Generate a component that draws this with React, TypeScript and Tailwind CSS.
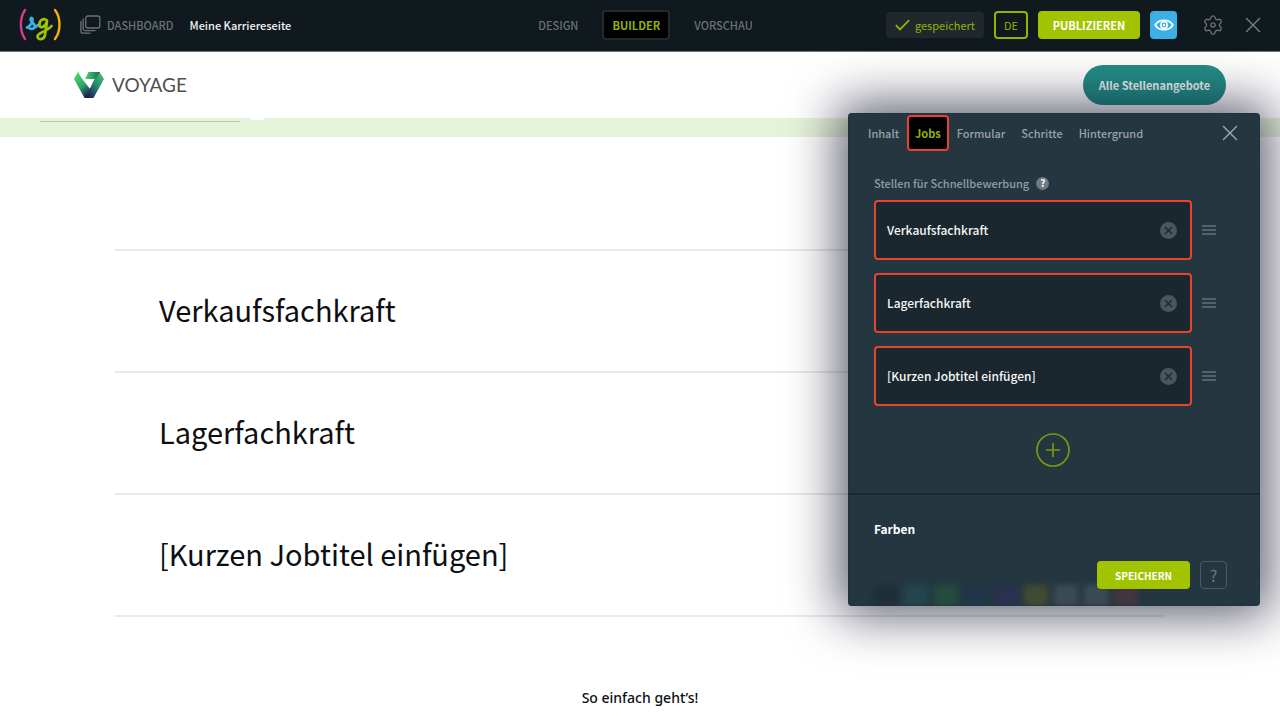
import { useState } from "react";

const topNav = ["DESIGN", "BUILDER", "VORSCHAU"];
const tabs = ["Inhalt", "Jobs", "Formular", "Schritte", "Hintergrund"];
const jobs = ["Verkaufsfachkraft", "Lagerfachkraft", "[Kurzen Jobtitel einfügen]"];
const swatches = [
  "bg-[#1b2a33]",
  "bg-[#24505a]",
  "bg-[#275a3d]",
  "bg-[#1d3652]",
  "bg-[#2e2f58]",
  "bg-[#545a2c]",
  "bg-[#4a5a64]",
  "bg-[#4a5a64]",
  "bg-[#59353e]",
];

function BrandLogo() {
  return (
    <svg width="44" height="36" viewBox="0 0 44 36" fill="none" strokeLinecap="round" strokeLinejoin="round" aria-hidden="true">
      <path d="M7 3C1.500 11 1.500 24 7 32" stroke="#d63a8e" strokeWidth="2.400" />
      <path d="M37 3C43 11 43 24 37 32" stroke="#f9b000" strokeWidth="2.400" />
      <path d="M9 20.500C12.500 19 15 15 14.500 12C14 9.500 11.500 12 13.500 14.500C15.500 17 18 18 16.500 20.500C15 22.500 11.500 22 10.500 20.500M16.500 20.500L20.500 18" stroke="#3bb0e6" strokeWidth="2.700" />
      <path d="M29 13.500C25.500 10.500 21 13.500 21.500 18C22 22 27 20.500 29 14.500L27 28C26 33.500 19.500 33 19.500 29.500C19.500 25.500 29 24.500 33.500 19" stroke="#a2c400" strokeWidth="2.700" />
    </svg>
  );
}

function StackIcon() {
  return (
    <svg width="22" height="19" viewBox="0 0 22 19" fill="none" stroke="currentColor" strokeWidth="1.300" aria-hidden="true">
      <rect x="5.800" y="1" width="14" height="12" rx="2" />
      <path d="M3.200 3.800V13.700a2 2 0 0 0 2 2H15M0.900 6.500V16.200a2 2 0 0 0 2 2H10" strokeLinecap="round" />
    </svg>
  );
}

function VoyageMark() {
  return (
    <svg width="30" height="28" viewBox="0 0 30 28" aria-hidden="true">
      <defs>
        <linearGradient id="left" x1="0" y1="0" x2="0.600" y2="1">
          <stop offset="0" stopColor="#4fe06a" />
          <stop offset="0.550" stopColor="#2fa968" />
          <stop offset="1" stopColor="#1d1f55" />
        </linearGradient>
        <linearGradient id="right" x1="1" y1="0" x2="0.100" y2="1">
          <stop offset="0" stopColor="#45cf6b" />
          <stop offset="0.500" stopColor="#268a70" />
          <stop offset="1" stopColor="#201b52" />
        </linearGradient>
        <linearGradient id="top" x1="0" y1="0" x2="1" y2="0">
          <stop offset="0" stopColor="#48d66a" />
          <stop offset="0.550" stopColor="#2c9a60" />
          <stop offset="1" stopColor="#206353" />
        </linearGradient>
      </defs>
      <path d="M4 1L0 8L10.500 27H17.500L19.500 22.500L16.500 18.500L7.500 7Z" fill="url(#left)" />
      <path d="M25.500 1L30 8L19.500 27H13L15.500 18.500L20.500 8Z" fill="url(#right)" />
      <path d="M14.500 1H26L21.500 8H11Z" fill="url(#top)" />
    </svg>
  );
}

function GearIcon() {
  return (
    <svg width="22" height="22" viewBox="0 0 24 24" fill="none" stroke="currentColor" strokeWidth="1.500" strokeLinejoin="round" aria-hidden="true">
      <path d="M9.671 4.136a2.340 2.340 0 0 1 4.659 0 2.340 2.340 0 0 0 3.319 1.915 2.340 2.340 0 0 1 2.330 4.033 2.340 2.340 0 0 0 0 3.831 2.340 2.340 0 0 1-2.330 4.033 2.340 2.340 0 0 0-3.319 1.915 2.340 2.340 0 0 1-4.659 0 2.340 2.340 0 0 0-3.320-1.915 2.340 2.340 0 0 1-2.330-4.033 2.340 2.340 0 0 0 0-3.831A2.340 2.340 0 0 1 6.350 6.051a2.340 2.340 0 0 0 3.319-1.915" />
      <circle cx="12" cy="12" r="2.300" />
    </svg>
  );
}

function CloseIcon() {
  return (
    <svg width="16" height="16" viewBox="0 0 16 16" fill="none" stroke="currentColor" strokeWidth="1.400" strokeLinecap="round" aria-hidden="true">
      <path d="M1.500 1.500L14.500 14.500M14.500 1.500L1.500 14.500" />
    </svg>
  );
}

function EyeIcon() {
  return (
    <svg width="20" height="14" viewBox="0 0 20 14" fill="none" aria-hidden="true">
      <path d="M1.200 7C4.500 0.800 15.500 0.800 18.800 7C15.500 13.200 4.500 13.200 1.200 7Z" stroke="#fff" strokeWidth="1.600" />
      <circle cx="10" cy="7" r="3.200" stroke="#fff" strokeWidth="1.500" />
      <circle cx="10" cy="7" r="1.200" fill="#fff" />
    </svg>
  );
}

function AppBar() {
  return (
    <header className="relative z-20 grid h-[52px] grid-cols-[1fr_auto_1fr] items-center border-b border-[#777] bg-[#10191e] pr-[19px] pb-0.5 pl-[18px] text-[11px] leading-4">
      <div className="flex items-center">
        <a href="#start" aria-label="Startseite">
          <BrandLogo />
        </a>
        <a href="#dashboard" className="ml-[18px] flex items-center gap-[5px] font-medium text-[#6c7275]">
          <StackIcon />
          DASHBOARD
        </a>
        <span className="ml-4 font-medium text-[#f2f3f3]">Meine Karriereseite</span>
      </div>
      <nav className="flex items-center gap-6 pl-3">
        {topNav.map((item) => (
          <a
            key={item}
            href={"#" + item.toLowerCase()}
            className={
              item === "BUILDER"
                ? "flex h-[30px] items-center rounded border-2 border-[#23292e] bg-black px-2 font-bold text-[#93b300]"
                : "font-medium text-[#6c7275]"
            }
          >
            {item}
          </a>
        ))}
      </nav>
      <div className="flex items-center justify-end">
        <span className="flex h-[26px] items-center gap-[5px] rounded bg-[#20282d] px-[9px] text-[#93b300]">
          <svg width="15" height="12" viewBox="0 0 15 12" fill="none" stroke="currentColor" strokeWidth="1.800" aria-hidden="true">
            <path d="M0.800 6.200L5 10.500L14.200 1.200" />
          </svg>
          gespeichert
        </span>
        <button className="ml-[10px] h-7 w-[34px] rounded border-2 border-[#93b300] text-[#93b300]">DE</button>
        <button className="ml-[10px] h-7 w-[102px] rounded bg-[#a2c400] font-bold text-white">PUBLIZIEREN</button>
        <button aria-label="Ansicht" className="ml-[10px] flex h-7 w-[27px] items-center justify-center rounded bg-[#3bb0e6]">
          <EyeIcon />
        </button>
        <button aria-label="Einstellungen" className="ml-[25px] text-[#6c7275]">
          <GearIcon />
        </button>
        <button aria-label="Schließen" className="ml-[21px] text-[#7b8083]">
          <CloseIcon />
        </button>
      </div>
    </header>
  );
}

function JobField({ value, index }: { value: string; index: number }) {
  const [text, setText] = useState(value);
  return (
    <li className="flex items-center gap-[10px]">
      <div className="flex h-[60px] flex-1 items-center rounded border-2 border-[#e9432d] bg-[#1a272e] pr-[13px] pl-[11px]">
        <input
          aria-label={"Stelle " + (index + 1)}
          value={text}
          onChange={(event) => setText(event.target.value)}
          className="min-w-0 flex-1 bg-transparent text-xs leading-5 font-medium text-[#f5f6f6] outline-none"
        />
        <button
          aria-label="Stelle entfernen"
          onClick={() => setText("")}
          className="flex size-[17px] items-center justify-center rounded-full bg-[#4b565a] text-[#1a272e]"
        >
          <svg width="9" height="9" viewBox="0 0 9 9" fill="none" stroke="currentColor" strokeWidth="1.400" aria-hidden="true">
            <path d="M1 1L8 8M8 1L1 8" />
          </svg>
        </button>
      </div>
      <button aria-label="Stelle verschieben" className="text-[#53616a]">
        <svg width="14" height="10" viewBox="0 0 14 10" fill="none" stroke="currentColor" strokeWidth="2" aria-hidden="true">
          <path d="M0 1H14M0 5H14M0 9H14" />
        </svg>
      </button>
    </li>
  );
}

function EditorPanel() {
  return (
    <aside className="absolute top-[113px] right-5 z-10 w-[412px] rounded bg-[#243640] shadow-[0_0_50px_10px_rgba(10,10,38,0.65)] ring-1 ring-[#14303c]/40 ring-inset">
      <div className="flex h-10 items-center justify-between pr-[22px] pl-3">
        <nav className="flex items-center text-[11px] leading-4 font-medium">
          {tabs.map((tab) => (
            <a
              key={tab}
              href={"#" + tab.toLowerCase()}
              className={
                tab === "Jobs"
                  ? "flex h-9 items-center rounded border-2 border-[#e9432d] bg-black px-[6px] font-bold text-[#93b300]"
                  : "px-2 text-[#99a2a7]"
              }
            >
              {tab}
            </a>
          ))}
        </nav>
        <button aria-label="Panel schließen" className="text-[#a3abaf]">
          <CloseIcon />
        </button>
      </div>
      <section className="border-b-2 border-[#1a2a33] px-[26px] pt-[22px] pb-[26px]">
        <h2 className="flex items-center gap-[7px] text-[11px] leading-4 font-medium text-[#939da2]">
          Stellen für Schnellbewerbung
          <span className="flex size-[13px] items-center justify-center rounded-full bg-[#6e7a80] text-[10px] leading-none font-bold text-white">?</span>
        </h2>
        <ul className="mt-[9px] mr-[18px] flex flex-col gap-[13px]">
          {jobs.map((job, index) => (
            <JobField key={job} value={job} index={index} />
          ))}
        </ul>
        <div className="mt-[27px] mr-[2px] flex justify-center">
          <button aria-label="Stelle hinzufügen" className="text-[#7e9611]">
            <svg width="34" height="34" viewBox="0 0 34 34" fill="none" stroke="currentColor" strokeWidth="1.700" aria-hidden="true">
              <circle cx="17" cy="17" r="16" />
              <path d="M10 17H24M17 10V24" />
            </svg>
          </button>
        </div>
      </section>
      <h2 className="px-[26px] pt-6 text-xs leading-5 font-bold text-white">Farben</h2>
      <div className="relative flex h-[67px] items-end overflow-hidden pl-[26px]">
        <div className="flex gap-[6px] opacity-60 blur-[3px]" aria-hidden="true">
          {swatches.map((color, index) => (
            <span key={index} className={"h-[21px] w-6 " + color} />
          ))}
        </div>
        <div className="absolute right-[33px] bottom-[17px] flex items-center gap-[10px]">
          <button className="h-7 w-[93px] rounded bg-[#a2c400] text-[10px] font-bold text-white">SPEICHERN</button>
          <button className="h-7 w-[27px] rounded border border-[#4b5a63] text-base leading-4 text-[#6d7980]">?</button>
        </div>
      </div>
    </aside>
  );
}

export default function App() {
  return (
    <div className="relative h-screen overflow-hidden bg-white font-['Noto_Sans_CJK_SC',sans-serif]">
      <AppBar />
      <main>
        <div className="flex h-[66px] items-center justify-between pr-[54px] pl-[74px]">
          <a href="#voyage" className="flex items-center gap-2 font-['Lato',sans-serif] text-[19px] leading-6 text-[#505050]">
            <VoyageMark />
            VOYAGE
          </a>
          <button className="h-10 w-[143px] rounded-full bg-[#238d85] text-[11px] font-bold text-[#edf7f6]">Alle Stellenangebote</button>
        </div>
        <div className="flex h-[19px] items-start bg-[#e5f3d8] pl-10">
          <div className="mt-[3px] h-px w-[200px] bg-[#b9c4b1]" />
          <div className="ml-[10px] h-[2px] w-[14px] rounded-b-full bg-white" />
        </div>
        <div className="text-[#0c0f12]">
          <ul className="mx-auto mt-[112px] max-w-[1050px] border-t-2 border-[#e8e9ea]">
            {jobs.map((job) => (
              <li key={job} className="flex h-[122px] items-center border-b-2 border-[#e8e9ea] px-11 pb-1 text-[29px] leading-10 font-normal">
                {job}
              </li>
            ))}
          </ul>
          <p className="mt-[71px] text-center font-['Noto_Sans',sans-serif] text-sm leading-5 font-medium">So einfach geht’s!</p>
        </div>
      </main>
      <EditorPanel />
    </div>
  );
}
